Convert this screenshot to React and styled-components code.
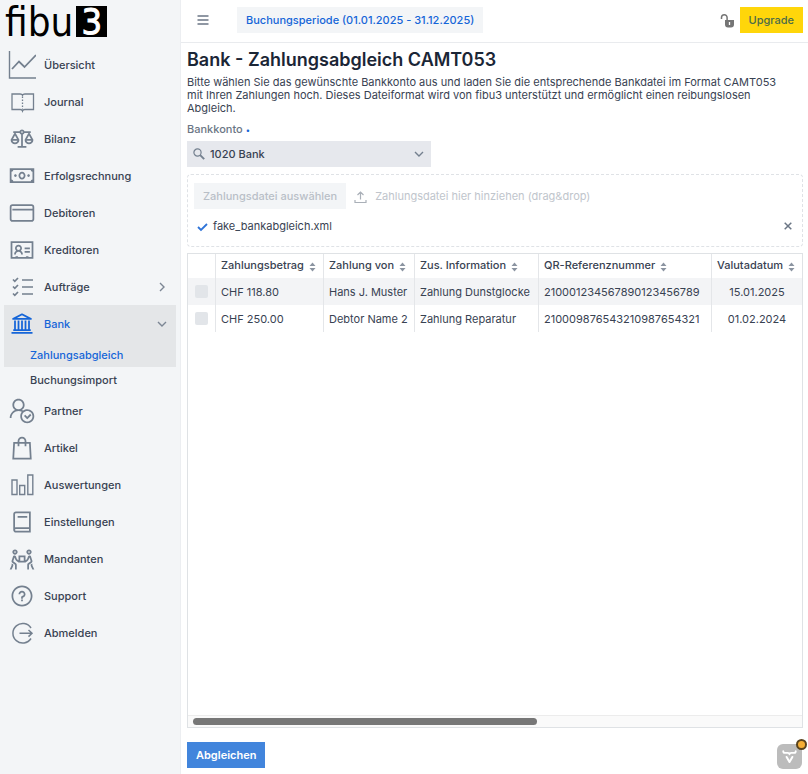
import React from 'react'

import styled, { createGlobalStyle } from 'styled-components';
import {
  LiaBalanceScaleSolid,
  LiaMoneyBillSolid,
  LiaCreditCard,
  LiaAddressCard,
  LiaUniversitySolid,
  LiaUserCheckSolid,
  LiaShoppingBagSolid,
  LiaBookSolid,
  LiaPeopleCarrySolid,
  LiaQuestionCircle,
} from 'react-icons/lia';

const GlobalStyle = createGlobalStyle`
  * {
    box-sizing: border-box;
  }

  body {
    margin: 0;
    background: #fff;
    color: #384252;
    font-family: Inter, "Liberation Sans", sans-serif;
    font-size: 11px;
  }

  button,
  select {
    font: inherit;
  }
`;

const Layout = styled.div`
  display: flex;
  min-height: 100vh;
`;

const Sidebar = styled.aside`
  flex: 0 0 181px;
  background: #f3f5f7;
  border-right: 1px solid #eceef1;
`;

const Logo = styled.a`
  display: flex;
  align-items: flex-end;
  height: 46px;
  padding-left: 5px;
  color: #000;
  font-family: "DejaVu Sans Condensed", "DejaVu Sans", sans-serif;
  font-size: 40px;
  line-height: 48px;
  text-decoration: none;
`;

const LogoBox = styled.span`
  width: 31px;
  height: 31px;
  margin: 0 0 9px 3px;
  background: #000;
  color: #fff;
  font-size: 36px;
  line-height: 32px;
  text-align: center;
  -webkit-text-stroke: 1px #fff;
`;

const NavList = styled.ul`
  margin: 0;
  padding: 0 4px;
  list-style: none;
`;

const NavLink = styled.a`
  display: flex;
  align-items: center;
  height: 37px;
  padding: 0 8px 0 4px;
  background: ${props => (props.$active ? '#e4e6e8' : 'transparent')};
  color: ${props => (props.$active ? '#1565d8' : '#384252')};
  font-weight: 500;
  text-decoration: none;

  > svg:first-child {
    width: 28px;
    height: 28px;
    color: ${props => (props.$active ? '#1565d8' : '#74808f')};
  }

  > svg:last-child {
    width: 12px;
    height: 12px;
    color: #7c8694;
  }
`;

const NavText = styled.span`
  flex: 1;
  padding-left: 8px;
`;

const SubLink = styled.a`
  display: flex;
  align-items: center;
  height: 25px;
  padding-left: 26px;
  background: ${props => (props.$active ? '#e4e6e8' : 'transparent')};
  color: ${props => (props.$active ? '#1565d8' : '#384252')};
  font-weight: 500;
  text-decoration: none;
`;

const Main = styled.div`
  flex: 1;
  display: flex;
  flex-direction: column;
  min-width: 0;
`;

const Header = styled.header`
  display: flex;
  align-items: center;
  height: 43px;
  padding: 0 5px 2px 10px;
  border-bottom: 1px solid #e9ebee;
`;

const IconButton = styled.button`
  display: flex;
  align-items: center;
  justify-content: center;
  width: 24px;
  height: 24px;
  padding: 0;
  border: 0;
  background: none;
  color: #6b7685;
`;

const Button = styled.button`
  height: 26px;
  padding: 0 9px;
  border: 0;
  background: ${props => props.$bg || '#f3f5f7'};
  color: ${props => props.$color || '#1565d8'};
  font-weight: ${props => props.$weight || 500};
  white-space: nowrap;
`;

const HeaderLeft = styled.div`
  flex: 1;
  display: flex;
  align-items: center;
  gap: 22px;
`;

const HeaderRight = styled.div`
  display: flex;
  align-items: center;
  gap: 5px;
`;

const Content = styled.main`
  flex: 1;
  display: flex;
  flex-direction: column;
  align-items: stretch;
  padding: 5px 5px 6px 6px;
`;

const Title = styled.h1`
  margin: 0;
  color: #1b2636;
  font-size: 18px;
  font-weight: 600;
  line-height: 23px;
`;

const Description = styled.p`
  margin: 5px 0 0;
  padding-right: 12px;
  line-height: 13px;
`;

const Label = styled.label`
  margin-top: 6px;
  color: #6b7685;
  font-weight: 500;
  line-height: 16px;

  span {
    color: #1565d8;
    font-size: 8px;
  }
`;

const SelectBox = styled.div`
  display: grid;
  align-items: center;
  width: 244px;
  height: 26px;
  margin-top: 3px;
  background: #e6e8ed;

  > * {
    grid-area: 1 / 1;
  }

  svg {
    margin: 0 6px;
    color: #74808f;
    pointer-events: none;
  }

  svg:last-child {
    justify-self: end;
  }
`;

const Select = styled.select`
  width: 100%;
  height: 100%;
  padding: 0 24px 0 23px;
  border: 0;
  background: transparent;
  color: #384252;
  font-weight: 500;
  appearance: none;
`;

const Upload = styled.section`
  height: 73px;
  margin-top: 7px;
  padding: 8px 2px 8px 6px;
  border: 1px dashed #dfe2e6;
  border-radius: 4px;
`;

const UploadRow = styled.div`
  display: flex;
  align-items: center;
  gap: 8px;
  color: #c0c5cc;
`;

const FileRow = styled.div`
  display: flex;
  align-items: center;
  gap: 5px;
  height: 24px;
  margin-top: 5px;
  padding-left: 3px;
  color: #384252;

  span {
    flex: 1;
  }
`;

const GridBox = styled.section`
  flex: 1;
  display: flex;
  flex-direction: column;
  margin-top: 6px;
  border: 1px solid #dfe2e5;
`;

const GridBody = styled.div`
  flex: 1;
  overflow: hidden;
`;

const Table = styled.table`
  width: 100%;
  table-layout: fixed;
  border-spacing: 0;
  white-space: nowrap;
`;

const Col = styled.col`
  width: ${props => props.$width};
`;

const Row = styled.tr`
  height: 27px;
  background: ${props => (props.$striped ? '#f3f4f6' : '#fff')};
`;

const HeadRow = styled(Row)`
  height: 24px;
`;

const Th = styled.th`
  padding: 0 0 2px 5px;
  border-right: 1px solid #e4e6e9;
  font-weight: 500;
  text-align: left;

  &:last-child {
    border-right: 0;
  }

  svg {
    margin-left: 5px;
    vertical-align: -3px;
  }
`;

const Td = styled.td`
  padding: 0 0 0 5px;
  border-right: 1px solid #e4e6e9;
  text-align: ${props => props.$align || 'left'};

  &:last-child {
    padding: 0;
    border-right: 0;
  }
`;

const Checkbox = styled.input`
  display: block;
  width: 13px;
  height: 13px;
  margin: 0 0 0 2px;
  border-radius: 2px;
  background: #e2e5e9;
  appearance: none;
`;

const ScrollTrack = styled.div`
  height: 12px;
  padding: 2px 5px;
  border-top: 1px solid #ececec;
  background: #fafafa;
`;

const ScrollThumb = styled.div`
  width: 57%;
  height: 7px;
  border-radius: 4px;
  background: #777;
`;

const Footer = styled.footer`
  margin-top: 14px;
`;

const DevTools = styled.button`
  position: fixed;
  right: 6px;
  bottom: 5px;
  width: 25px;
  height: 25px;
  padding: 0;
  border: 0;
  border-radius: 6px;
  background: #bcbcbc;

  svg {
    display: block;
  }

  &::after {
    content: '';
    position: absolute;
    top: -5px;
    right: -5px;
    width: 11px;
    height: 11px;
    box-sizing: border-box;
    border: 2px solid #5a431c;
    border-radius: 50%;
    background: #f5ae35;
  }
`;

const ChartIcon = () => (
  <svg viewBox="0 0 28 28" fill="none" stroke="currentColor">
    <path d="M1.500 0v27H28" strokeWidth="1.400" />
    <path d="M4 18l7-7.500 5.500 5.500L28 4" strokeWidth="1.800" />
  </svg>
);

const JournalIcon = () => (
  <svg viewBox="0 0 28 28" fill="none" stroke="currentColor" strokeWidth="1.300">
    <path d="M4 6h8.200q1.800 0 2.300 1.300Q15 6 16.800 6H25.500v15.500h-8.700q-1.800 0-2.300 1.500-.5-1.500-2.300-1.500H4z" />
    <path d="M14.500 8.500v13" strokeDasharray="1.500 1.500" />
  </svg>
);

const TasksIcon = () => (
  <svg viewBox="0 0 28 28" fill="none" stroke="currentColor" strokeWidth="1.400">
    <path d="M14 7h11M14 14h11M14 21h11" />
    <path d="M5 6.500l1.800 1.800L10 5M5 13.500l1.800 1.800L10 12M5 20.500l1.800 1.800L10 19" strokeWidth="1.700" />
  </svg>
);

const BarsIcon = () => (
  <svg viewBox="0 0 28 28" fill="none" stroke="currentColor" strokeWidth="1.400">
    <path d="M4 9h5v14.500H4zM11.700 14.500h5v9h-5zM19.800 4h5v19.500h-5z" />
  </svg>
);

const LogoutIcon = () => (
  <svg viewBox="0 0 28 28" fill="none" stroke="currentColor" strokeWidth="1.500">
    <path d="M23 9a9.800 9.800 0 1 0 0 10.500M11.500 14.300h12.500M20.500 11l3.500 3.300-3.500 3.300" />
  </svg>
);

const Chevron = ({ right }) => (
  <svg width="12" height="12" viewBox="0 0 12 12" fill="none" stroke="currentColor" strokeWidth="1.400">
    <path d={right ? 'M4 2l4 4-4 4' : 'M2 4l4 4 4-4'} />
  </svg>
);

const MenuIcon = () => (
  <svg width="12" height="12" viewBox="0 0 12 12" stroke="currentColor" strokeWidth="1.300">
    <path d="M.5 2h11M.5 6h11M.5 10h11" />
  </svg>
);

const UnlockIcon = () => (
  <svg width="15" height="15" viewBox="0 0 15 15">
    <path d="M1.500 6V4.500a2.800 2.800 0 0 1 5.600 0V8" fill="none" stroke="#757575" strokeWidth="1.500" />
    <path d="M5 7h9v4.500a3 3 0 0 1-3 3H8a3 3 0 0 1-3-3z" fill="#757575" />
    <path d="M9.500 9v3" stroke="#fff" strokeWidth="1.300" />
  </svg>
);

const SearchIcon = () => (
  <svg width="12" height="12" viewBox="0 0 12 12" fill="none" stroke="currentColor">
    <circle cx="4.500" cy="4.500" r="3.600" strokeWidth="1.200" />
    <path d="M7.200 7.200l4 4" strokeWidth="1.900" />
  </svg>
);

const UploadIcon = () => (
  <svg width="13" height="13" viewBox="0 0 13 13" fill="none" stroke="#aab0b8" strokeWidth="1.200">
    <path d="M6.500 9.500V2M3.500 5l3-3 3 3M1 10v2.500h11V10" />
  </svg>
);

const CheckIcon = () => (
  <svg width="11" height="11" viewBox="0 0 11 11" fill="none" stroke="#2f74d8" strokeWidth="1.800">
    <path d="M1 6l3 3 6-6" />
  </svg>
);

const CloseIcon = () => (
  <svg width="8" height="8" viewBox="0 0 8 8" stroke="#6b7685" strokeWidth="1.500">
    <path d="M.7 .7l6.600 6.600M7.300 .7L.7 7.300" />
  </svg>
);

const SortIcon = () => (
  <svg width="7" height="10" viewBox="0 0 7 10" fill="#8b94a1">
    <path d="M3.500 .5L6.500 4H.5zM3.500 9.500L.5 6h6z" />
  </svg>
);

const VaadinIcon = () => (
  <svg width="25" height="25" viewBox="0 0 26 26" fill="none" stroke="#fff" strokeLinecap="round" strokeLinejoin="round">
    <path d="M6.500 7.500q0 1.700 1.700 1.700h2.800q2 0 2 1.500 0-1.500 2-1.500h2.800q1.700 0 1.700-1.700" strokeWidth="1.900" />
    <path d="M10 13.500l3 5.200 3-5.200" strokeWidth="2.100" />
  </svg>
);

const topItems = [
  { text: 'Übersicht', Icon: ChartIcon },
  { text: 'Journal', Icon: JournalIcon },
  { text: 'Bilanz', Icon: LiaBalanceScaleSolid },
  { text: 'Erfolgsrechnung', Icon: LiaMoneyBillSolid },
  { text: 'Debitoren', Icon: LiaCreditCard },
  { text: 'Kreditoren', Icon: LiaAddressCard },
  { text: 'Aufträge', Icon: TasksIcon, closed: true },
  {
    text: 'Bank',
    Icon: LiaUniversitySolid,
    active: true,
    children: ['Zahlungsabgleich', 'Buchungsimport'],
  },
  { text: 'Partner', Icon: LiaUserCheckSolid },
  { text: 'Artikel', Icon: LiaShoppingBagSolid },
  { text: 'Auswertungen', Icon: BarsIcon },
  { text: 'Einstellungen', Icon: LiaBookSolid },
  { text: 'Mandanten', Icon: LiaPeopleCarrySolid },
  { text: 'Support', Icon: LiaQuestionCircle },
  { text: 'Abmelden', Icon: LogoutIcon },
];

const columns = [
  { title: 'Zahlungsbetrag', width: '108px' },
  { title: 'Zahlung von', width: '91px' },
  { title: 'Zus. Information', width: '124px' },
  { title: 'QR-Referenznummer', width: '173px' },
  { title: 'Valutadatum', width: 'auto' },
];

const payments = [
  ['CHF 118.80', 'Hans J. Muster', 'Zahlung Dunstglocke', '210001234567890123456789', '15.01.2025'],
  ['CHF 250.00', 'Debtor Name 2', 'Zahlung Reparatur', '210009876543210987654321', '01.02.2024'],
];

const Navigation = () => (
  <nav>
    <NavList>
      {topItems.map(({ text, Icon, active, closed, children }) => (
        <li key={text}>
          <NavLink href="#" $active={active}>
            <Icon />
            <NavText>{text}</NavText>
            {(closed || children) && <Chevron right={closed} />}
          </NavLink>
          {children && children.map((child, i) => (
            <SubLink key={child} href="#" $active={i === 0}>{child}</SubLink>
          ))}
        </li>
      ))}
    </NavList>
  </nav>
);

const PaymentsGrid = () => (
  <GridBox>
    <GridBody>
      <Table>
        <colgroup>
          <Col $width="28px" />
          {columns.map(col => <Col key={col.title} $width={col.width} />)}
        </colgroup>
        <thead>
          <HeadRow>
            <Th aria-label="Auswahl" />
            {columns.map(col => (
              <Th key={col.title}>{col.title}<SortIcon /></Th>
            ))}
          </HeadRow>
        </thead>
        <tbody>
          {payments.map((payment, i) => (
            <Row key={payment[3]} $striped={i % 2 === 0}>
              <Td><Checkbox type="checkbox" aria-label={payment[1]} /></Td>
              {payment.map((value, j) => (
                <Td key={value} $align={j === 4 ? 'center' : 'left'}>{value}</Td>
              ))}
            </Row>
          ))}
        </tbody>
      </Table>
    </GridBody>
    <ScrollTrack>
      <ScrollThumb />
    </ScrollTrack>
  </GridBox>
);

const App = () => {
  return (
    <Layout>
      <GlobalStyle />
      <Sidebar>
        <Logo href="#">fibu<LogoBox>3</LogoBox></Logo>
        <Navigation />
      </Sidebar>
      <Main>
        <Header>
          <HeaderLeft>
            <IconButton aria-label="Menü"><MenuIcon /></IconButton>
            <Button>Buchungsperiode (01.01.2025 - 31.12.2025)</Button>
          </HeaderLeft>
          <HeaderRight>
            <UnlockIcon />
            <Button $bg="#ffd60a" $color="#4b6b4a">Upgrade</Button>
          </HeaderRight>
        </Header>
        <Content>
          <Title>Bank - Zahlungsabgleich CAMT053</Title>
          <Description>
            Bitte wählen Sie das gewünschte Bankkonto aus und laden Sie die entsprechende Bankdatei im Format CAMT053 mit Ihren Zahlungen hoch. Dieses Dateiformat wird von fibu3 unterstützt und ermöglicht einen reibungslosen Abgleich.
          </Description>
          <Label htmlFor="bankkonto">Bankkonto <span>•</span></Label>
          <SelectBox>
            <Select id="bankkonto">
              <option>1020 Bank</option>
            </Select>
            <SearchIcon />
            <Chevron />
          </SelectBox>
          <Upload>
            <UploadRow>
              <Button $color="#b9bfc7" disabled>Zahlungsdatei auswählen</Button>
              <UploadIcon />
              Zahlungsdatei hier hinziehen (drag&amp;drop)
            </UploadRow>
            <FileRow>
              <CheckIcon />
              <span>fake_bankabgleich.xml</span>
              <IconButton aria-label="Datei entfernen"><CloseIcon /></IconButton>
            </FileRow>
          </Upload>
          <PaymentsGrid />
          <Footer>
            <Button $bg="#4285dc" $color="#fff" $weight={600}>Abgleichen</Button>
          </Footer>
        </Content>
      </Main>
      <DevTools aria-label="Vaadin"><VaadinIcon /></DevTools>
    </Layout>
  );
}

export default App;
